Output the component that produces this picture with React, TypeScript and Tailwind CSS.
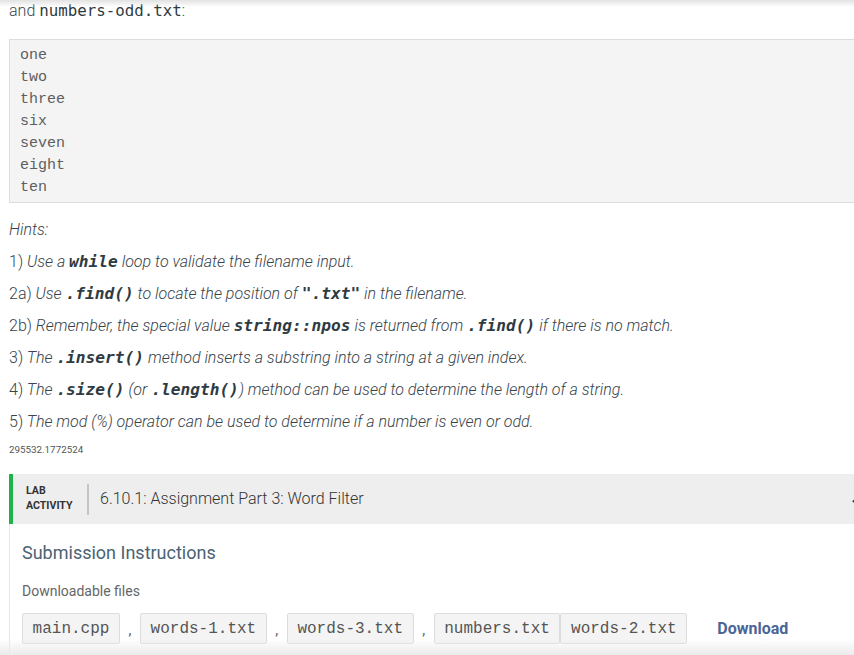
import React from "react";

const code = "font-['DejaVu_Sans_Mono',monospace]";

function C({ children }: { children: React.ReactNode }) {
  return <span className={`${code} italic font-bold text-[16.2px] text-[#2f3b42]`}>{children}</span>;
}

function FileBox({ name }: { name: string }) {
  return (
    <span className="inline-flex items-center h-[31px] px-[9.6px] bg-[#f4f4f4] border border-[#dcdcdc] rounded-[2px] font-['Liberation_Mono',monospace] text-[16px] text-[#555]">
      {name}
    </span>
  );
}

function Comma() {
  return <span className="w-[20px] text-center text-[#666] font-['Roboto',sans-serif] text-[15px] pt-[6px]">,</span>;
}

export default function App() {
  const lines = ["one", "two", "three", "six", "seven", "eight", "ten"];
  return (
    <div className="relative w-[854px] h-[655px] overflow-hidden bg-white font-['Roboto',sans-serif] text-[#333]">
      <div className="pl-[9px] w-[880px]">
        <p className="h-[22px] leading-[22px] text-[16px] font-light text-[#3a4449]">
          and <span className={`${code} text-[15.8px] font-medium text-[#2f3b42]`}>numbers-odd.txt</span>:
        </p>
        <pre className="mt-[17px] bg-[#f4f4f4] border border-[#dddddd] pl-[10px] pt-[5px] pb-[3px] font-['Liberation_Mono',monospace] text-[15px] leading-[22px] text-[#5e5e5e]">
          {lines.map((l) => (
            <div key={l}>{l}</div>
          ))}
        </pre>
        <div className="mt-[11px] text-[16px] font-light italic text-[#37434a]">
          <p className="h-[32px] leading-[32px]">Hints:</p>
          <p className="h-[32px] leading-[32px]">
            <span className="not-italic">1)</span> Use a <C>while</C> loop to validate the filename input.
          </p>
          <p className="h-[32px] leading-[32px]">
            <span className="not-italic">2a)</span> Use <C>.find()</C> to locate the position of <C>".txt"</C> in the filename.
          </p>
          <p className="h-[32px] leading-[32px]">
            <span className="not-italic">2b)</span> Remember, the special value <C>string::npos</C> is returned from <C>.find()</C> if there is no match.
          </p>
          <p className="h-[32px] leading-[32px]">
            <span className="not-italic">3)</span> The <C>.insert()</C> method inserts a substring into a string at a given index.
          </p>
          <p className="h-[32px] leading-[32px]">
            <span className="not-italic">4)</span> The <C>.size()</C> (or <C>.length()</C>) method can be used to determine the length of a string.
          </p>
          <p className="h-[32px] leading-[32px]">
            <span className="not-italic">5)</span> The mod (%) operator can be used to determine if a number is even or odd.
          </p>
        </div>
        <p className="mt-[6px] h-[12px] leading-[12px] text-[9.8px] text-[#555]">295532.1772524</p>

        <div className="mt-[18px] h-[50px] flex items-center bg-[#eeeeee] border-l-[4px] border-[#22b24c]">
          <div className="pl-[13px] pb-[3px] w-[74px] font-['Roboto',sans-serif] font-bold text-[10.6px] leading-[15px] text-[#333]">
            <div>LAB</div>
            <div>ACTIVITY</div>
          </div>
          <div className="w-[2px] h-[31px] bg-[#c4c4c4]" />
          <div className="pl-[11px] text-[16px] font-light text-[#333]">6.10.1: Assignment Part 3: Word Filter</div>
          <div className="ml-auto mr-[16px] w-[12px] flex">
            <svg width="12" height="8" viewBox="0 0 12 8">
              <path d="M1 7 L6 2 L11 7" stroke="#333" strokeWidth="2.2" fill="none" />
            </svg>
          </div>
        </div>

        <div className="border-l border-[#e6e6e6] pl-[12px] pb-[20px]">
          <h2 className="pt-[17px] h-[41px] leading-[24px] text-[18px] font-normal text-[#4a6372]">Submission Instructions</h2>
          <p className="mt-[16px] h-[20px] leading-[20px] text-[14px] text-[#666]">Downloadable files</p>
          <div className="mt-[12px] flex items-start">
            <FileBox name="main.cpp" />
            <Comma />
            <FileBox name="words-1.txt" />
            <Comma />
            <FileBox name="words-3.txt" />
            <Comma />
            <FileBox name="numbers.txt" />
            <FileBox name="words-2.txt" />
            <span className="ml-[30px] h-[31px] leading-[31px] text-[16px] font-bold text-[#4b6597]">Download</span>
          </div>
        </div>
      </div>
      <div className="absolute top-0 left-0 right-0 h-[7px] bg-gradient-to-b from-[#e2e2e2] to-transparent pointer-events-none" />
      <div className="absolute bottom-0 left-0 right-0 h-[16px] bg-gradient-to-b from-transparent to-[#ebebeb] pointer-events-none" />
    </div>
  );
}
